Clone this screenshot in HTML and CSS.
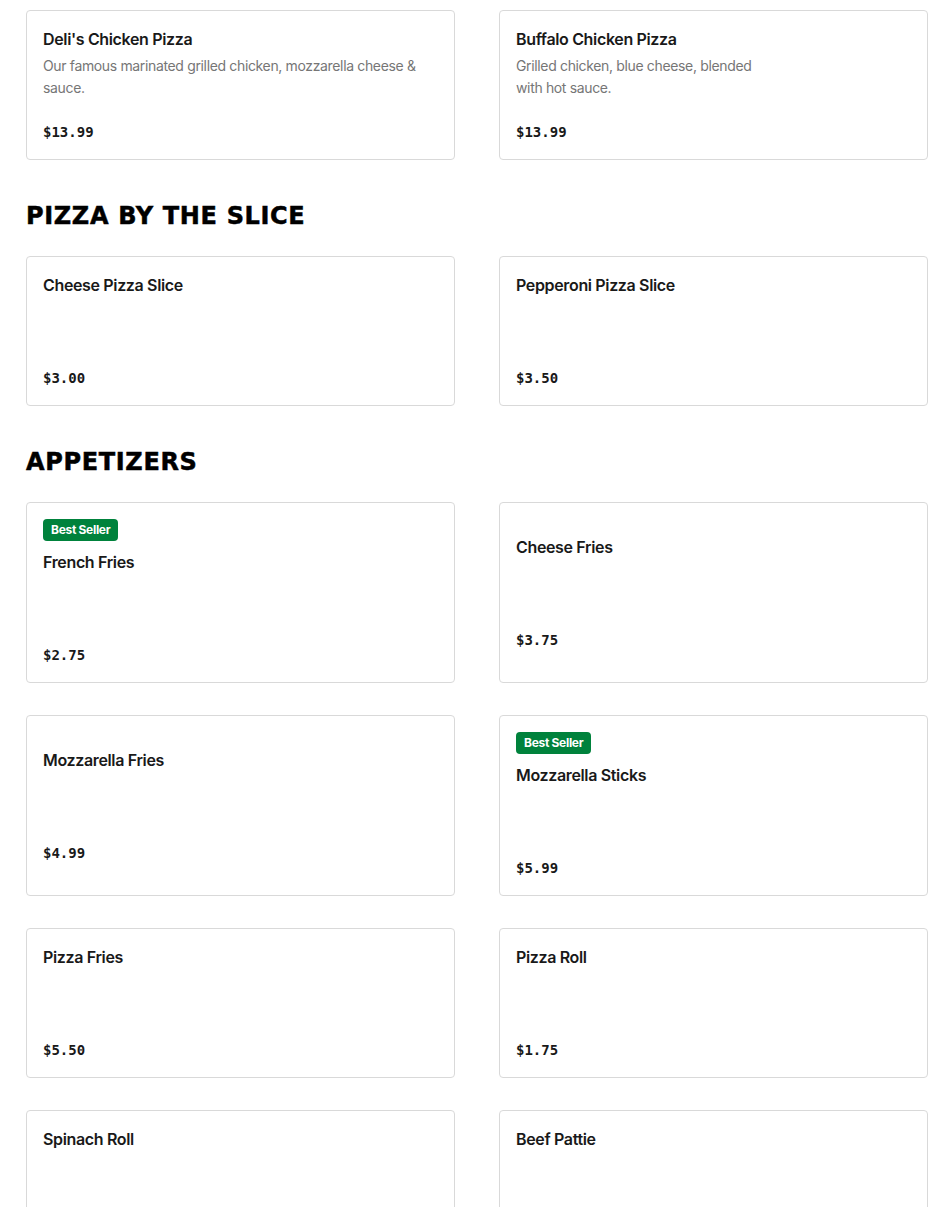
FILE: index.html
```html
<!DOCTYPE html>
<html lang="en">
<head>
<meta charset="utf-8">
<title>Menu</title>
<link rel="stylesheet" href="styles.css">
</head>
<body>
<main class="menu">
  <section class="section">
    <div class="grid">
      <div class="card">
        <div class="item">
          <div class="item-name">Deli's Chicken Pizza</div>
          <div class="item-desc">Our famous marinated grilled chicken, mozzarella cheese &amp; sauce.</div>
          <div class="item-price">$13.99</div>
        </div>
      </div>
      <div class="card">
        <div class="item">
          <div class="item-name">Buffalo Chicken Pizza</div>
          <div class="item-desc">Grilled chicken, blue cheese, blended<br>with hot sauce.</div>
          <div class="item-price">$13.99</div>
        </div>
      </div>
    </div>
  </section>

  <section class="section">
    <h2 class="section-title">PIZZA BY THE SLICE</h2>
    <div class="grid">
      <div class="card">
        <div class="item">
          <div class="item-name">Cheese Pizza Slice</div>
          <div class="item-price">$3.00</div>
        </div>
      </div>
      <div class="card">
        <div class="item">
          <div class="item-name">Pepperoni Pizza Slice</div>
          <div class="item-price">$3.50</div>
        </div>
      </div>
    </div>
  </section>

  <section class="section">
    <h2 class="section-title">APPETIZERS</h2>
    <div class="grid">
      <div class="card">
        <span class="badge">Best Seller</span>
        <div class="item">
          <div class="item-name">French Fries</div>
          <div class="item-price">$2.75</div>
        </div>
      </div>
      <div class="card">
        <div class="item">
          <div class="item-name">Cheese Fries</div>
          <div class="item-price">$3.75</div>
        </div>
      </div>
      <div class="card">
        <div class="item">
          <div class="item-name">Mozzarella Fries</div>
          <div class="item-price">$4.99</div>
        </div>
      </div>
      <div class="card">
        <span class="badge">Best Seller</span>
        <div class="item">
          <div class="item-name">Mozzarella Sticks</div>
          <div class="item-price">$5.99</div>
        </div>
      </div>
      <div class="card">
        <div class="item">
          <div class="item-name">Pizza Fries</div>
          <div class="item-price">$5.50</div>
        </div>
      </div>
      <div class="card">
        <div class="item">
          <div class="item-name">Pizza Roll</div>
          <div class="item-price">$1.75</div>
        </div>
      </div>
      <div class="card">
        <div class="item">
          <div class="item-name">Spinach Roll</div>
          <div class="item-price">$2.50</div>
        </div>
      </div>
      <div class="card">
        <div class="item">
          <div class="item-name">Beef Pattie</div>
          <div class="item-price">$2.50</div>
        </div>
      </div>
    </div>
  </section>
</main>
</body>
</html>
```

FILE: styles.css
```css
* { box-sizing: border-box; }

html, body {
  margin: 0;
  padding: 0;
  background: #ffffff;
}

body {
  font-family: Inter, "Liberation Sans", sans-serif;
  color: #191919;
}

.menu {
  padding: 10px 22px 0 26px;
}

.section-title {
  margin: 39px 0 23px;
  font-family: "DejaVu Sans", Inter, sans-serif;
  font-weight: 700;
  font-size: 24px;
  line-height: 34px;
  color: #000000;
  letter-spacing: 0.65px;
  -webkit-text-stroke: 0.5px #000000;
}

.grid {
  display: grid;
  grid-template-columns: 1fr 1fr;
  column-gap: 44px;
  row-gap: 32px;
}

.card {
  display: flex;
  flex-direction: column;
  justify-content: center;
  align-items: flex-start;
  min-height: 150px;
  padding: 16px;
  border: 1px solid #d9d9d9;
  border-radius: 4px;
  background: #ffffff;
}

.item {
  display: flex;
  flex-direction: column;
  min-height: 116px;
  width: 100%;
}

.item-name {
  font-size: 16px;
  font-weight: 600;
  line-height: 24px;
  letter-spacing: -0.35px;
  color: #191919;
}

.item-desc {
  margin-top: 4px;
  font-size: 14px;
  line-height: 22px;
  letter-spacing: -0.35px;
  color: #767676;
}

.item-price {
  margin-top: auto;
  font-family: "DejaVu Sans Mono", "Liberation Mono", monospace;
  font-weight: 700;
  font-size: 14px;
  line-height: 22px;
  color: #191919;
}

.badge {
  display: inline-block;
  margin-bottom: 9px;
  padding: 0 8px;
  height: 22px;
  line-height: 22px;
  border-radius: 4px;
  background: #00823c;
  color: #ffffff;
  font-size: 12px;
  font-weight: 700;
  letter-spacing: -0.3px;
}
```
